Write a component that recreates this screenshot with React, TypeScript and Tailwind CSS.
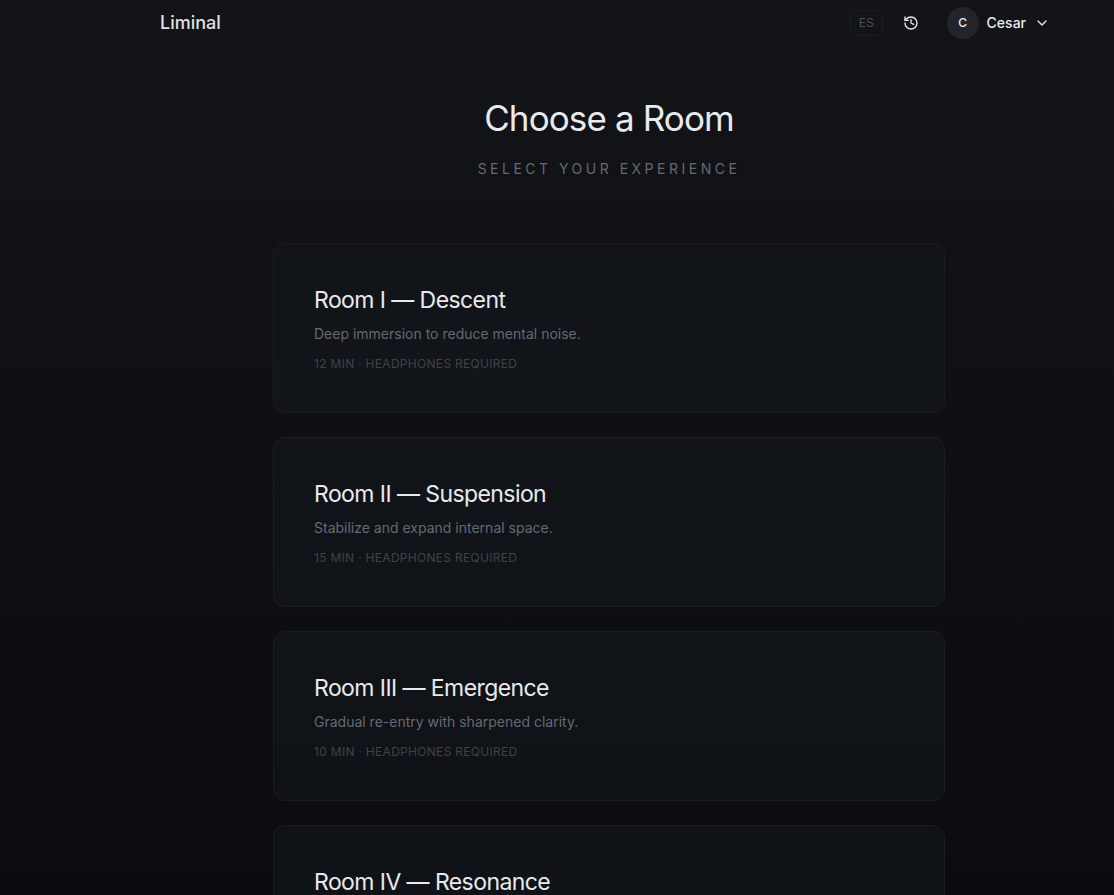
import React from "react";
import { ChevronDown, History } from "lucide-react";

const rooms = [
  { title: "Room I — Descent", text: "Deep immersion to reduce mental noise.", minutes: 12 },
  { title: "Room II — Suspension", text: "Stabilize and expand internal space.", minutes: 15 },
  { title: "Room III — Emergence", text: "Gradual re-entry with sharpened clarity.", minutes: 10 },
  { title: "Room IV — Resonance", text: "Harmonic alignment for deep focus.", minutes: 12 },
];

function Header() {
  return (
    <header className="flex h-[46px] items-center justify-between px-14">
      <a href="#" className="text-lg font-medium text-[#dfe1e4]">
        Liminal
      </a>
      <div className="flex items-center">
        <button className="h-[26px] rounded-lg border border-[#1b1d21] px-2 text-xs text-[#4b5058]">
          ES
        </button>
        <button aria-label="History" className="ml-3 p-2 text-[#e8eaed]">
          <History className="size-4" />
        </button>
        <button className="ml-5 flex items-center gap-2 pr-2 text-sm font-medium text-[#e8eaed]">
          <span className="flex size-8 items-center justify-center rounded-full bg-[#212529] text-xs">
            C
          </span>
          Cesar
          <ChevronDown className="size-4" />
        </button>
      </div>
    </header>
  );
}

function RoomCard({ title, text, minutes }: { title: string; text: string; minutes: number }) {
  return (
    <button className="w-full rounded-xl border border-[#1b1e21] bg-[#13181c]/60 p-10 text-left">
      <h2 className="text-[23px] leading-8 tracking-tight text-[#e8eaed]">{title}</h2>
      <p className="mt-1.5 text-sm leading-6 text-[#646a73]">{text}</p>
      <p className="mt-2.5 text-xs leading-4 tracking-wide text-[#3e4349] uppercase">
        {minutes} min · Headphones required
      </p>
    </button>
  );
}

function App() {
  return (
    <div className="h-screen overflow-y-auto bg-linear-to-b from-[#121418] to-[#0b0c10] pl-[104px] font-['Inter',sans-serif] [scrollbar-width:none]">
      <Header />
      <main className="mx-auto max-w-2xl pt-[47px] pb-16">
        <div className="text-center">
          <h1 className="text-[35px] leading-[50px] tracking-tight text-[#e8eaed]">
            Choose a Room
          </h1>
          <p className="mt-4 text-sm tracking-[0.25em] text-[#646a73] uppercase">
            Select your experience
          </p>
        </div>
        <div className="mt-16 flex flex-col gap-6">
          {rooms.map((room) => (
            <RoomCard key={room.title} {...room} />
          ))}
        </div>
      </main>
    </div>
  );
}

export default App;
